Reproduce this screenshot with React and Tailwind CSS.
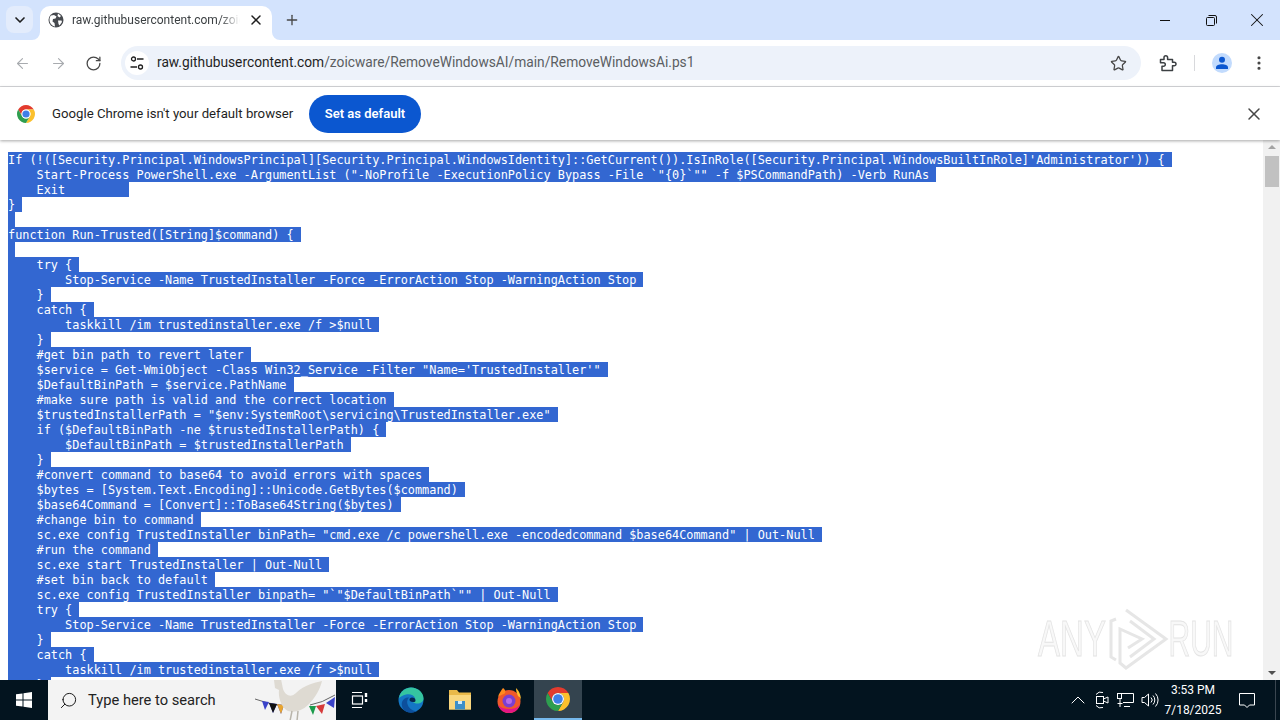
import React from 'react';
import { ArrowLeft, ArrowRight, ChevronDown, ChevronUp, EllipsisVertical, Plus, RotateCw, Search, Star, X } from 'lucide-react';

const UI_FONT = 'font-["Roboto",sans-serif]';

const CODE_LINES = [
  'If (!([Security.Principal.WindowsPrincipal][Security.Principal.WindowsIdentity]::GetCurrent()).IsInRole([Security.Principal.WindowsBuiltInRole]\'Administrator\')) {',
  '    Start-Process PowerShell.exe -ArgumentList ("-NoProfile -ExecutionPolicy Bypass -File `"{0}`"" -f $PSCommandPath) -Verb RunAs',
  '    Exit        ',
  '}',
  '',
  'function Run-Trusted([String]$command) {',
  '',
  '    try {',
  '        Stop-Service -Name TrustedInstaller -Force -ErrorAction Stop -WarningAction Stop',
  '    }',
  '    catch {',
  '        taskkill /im trustedinstaller.exe /f >$null',
  '    }',
  '    #get bin path to revert later',
  '    $service = Get-WmiObject -Class Win32_Service -Filter "Name=\'TrustedInstaller\'"',
  '    $DefaultBinPath = $service.PathName',
  '    #make sure path is valid and the correct location',
  '    $trustedInstallerPath = "$env:SystemRoot\\servicing\\TrustedInstaller.exe"',
  '    if ($DefaultBinPath -ne $trustedInstallerPath) {',
  '        $DefaultBinPath = $trustedInstallerPath',
  '    }',
  '    #convert command to base64 to avoid errors with spaces',
  '    $bytes = [System.Text.Encoding]::Unicode.GetBytes($command)',
  '    $base64Command = [Convert]::ToBase64String($bytes)',
  '    #change bin to command',
  '    sc.exe config TrustedInstaller binPath= "cmd.exe /c powershell.exe -encodedcommand $base64Command" | Out-Null',
  '    #run the command',
  '    sc.exe start TrustedInstaller | Out-Null',
  '    #set bin back to default',
  '    sc.exe config TrustedInstaller binpath= "`"$DefaultBinPath`"" | Out-Null',
  '    try {',
  '        Stop-Service -Name TrustedInstaller -Force -ErrorAction Stop -WarningAction Stop',
  '    }',
  '    catch {',
  '        taskkill /im trustedinstaller.exe /f >$null',
  '    }',
];

const ChromeLogo = ({ size }) => (
  <svg width={size} height={size} viewBox="4 4 40 40">
    <path d="M24 14H41.32A20 20 0 0 0 6.68 14L15.34 29A10 10 0 0 1 24 14z" fill="#e33b2e" />
    <path d="M41.32 14H24A10 10 0 0 1 32.66 29L24 44A20 20 0 0 0 41.32 14z" fill="#fbc02d" />
    <path d="M24 44L32.66 29A10 10 0 0 1 15.34 29L6.68 14A20 20 0 0 0 24 44z" fill="#2e9e4f" />
    <circle cx="24" cy="24" r="10" fill="#fff" />
    <circle cx="24" cy="24" r="8" fill="#3f7fe8" />
  </svg>
);

const GlobeIcon = () => (
  <svg width="16" height="16" viewBox="0 0 16 16">
    <circle cx="8" cy="8" r="7.5" fill="#474a4f" />
    <path d="M3 3.5 6 3l2.5 1.5-1 2L5 7 4.5 9.5 6.500 11l.5 3.500C4 14 1.500 11 1.500 8 1.500 6 2 4.500 3 3.500zM10 1.500l3 2.500-1.500 1.500L9.500 4zM10 8.500l3.500 0 .5 1.500-2.500 3.500L10.500 12z" fill="#fff" />
  </svg>
);

const TuneIcon = () => (
  <svg width="16" height="16" viewBox="0 0 16 16" fill="none" stroke="#1f1f1f" strokeWidth="1.300">
    <circle cx="4.500" cy="4" r="2" />
    <path d="M8 4h6.500M1.500 12H8" />
    <circle cx="11.500" cy="12" r="2" />
  </svg>
);

const PuzzleIcon = () => (
  <svg width="18" height="18" viewBox="0 0 18 18" fill="none" stroke="#3c4043" strokeWidth="1.500" strokeLinejoin="round">
    <path d="M1.500 5.500H5V3.500A1.800 1.800 0 0 1 8.600 3.500V5.500H13.500V8.200H15.200A1.800 1.800 0 0 1 15.200 11.800H13.500V16.500H3V12.300H4.500A1.800 1.800 0 0 0 4.500 8.700H1.500z" />
  </svg>
);

const AvatarIcon = () => (
  <div className="w-5 h-5 rounded-full bg-[#c2dbfd] flex items-center justify-center">
    <svg width="14" height="14" viewBox="0 0 14 14" fill="#0b57d0">
      <circle cx="7" cy="3.800" r="3" />
      <path d="M1 13v-1.500C1 9.500 4 8.300 7 8.300s6 1.200 6 3.200V13z" />
    </svg>
  </div>
);

const RestoreIcon = () => (
  <svg width="11" height="11" viewBox="0 0 11 11" fill="none" stroke="#111" strokeWidth="1">
    <rect x="0.500" y="2.500" width="8" height="8" rx="1" />
    <path d="M2.500 0.500H9A1.500 1.500 0 0 1 10.500 2V8.500" />
  </svg>
);

const WindowsLogo = () => (
  <svg width="16" height="16" viewBox="0 0 16 16" fill="#fff">
    <path d="M0 2.300 6.500 1.400V7.500H0zM7.500 1.200 16 0V7.500H7.500zM0 8.500H6.500V14.600L0 13.700zM7.500 8.500H16V16L7.500 14.800z" />
  </svg>
);

const TaskViewIcon = () => (
  <svg width="18" height="18" viewBox="0 0 18 18" fill="none" stroke="#fff" strokeWidth="1.200">
    <path d="M1 1.500H11M1 16.500H11" />
    <rect x="1.500" y="5" width="10" height="8" />
    <path d="M15 2V6M15 8V11" strokeWidth="2.400" />
  </svg>
);

const EdgeLogo = () => (
  <svg width="26" height="26" viewBox="0 0 26 26">
    <circle cx="13" cy="13" r="12.500" fill="#1476c4" />
    <path d="M1 11C2 4 8 .5 13 .5c7 0 12.500 5 12.500 11 0 3.500-3 5-6 5-2 0-4-.6-4.500-1.500 2-1 2.500-2.500 2-4C16 8 12 6.500 8 7.500 4.500 8.500 2 10 1 11z" fill="#35c4a0" />
    <path d="M9 25c-4-1.500-6-6-5-10 1-3 4-5 7-4.500-2 2-2.500 5-1 8 1.500 3.500 5 5.500 9 5.500-3 2-7 2-10 1z" fill="#0c4f9c" />
    <path d="M14 10.500c2 0 3.500 1.300 3.500 3 0 1-.6 1.500-2.500 1.500-2.500 0-3.500-1-3.500-2.500 0-1 1-2 2.500-2z" fill="#06264f" />
  </svg>
);

const FolderLogo = () => (
  <svg width="24" height="22" viewBox="0 0 24 22">
    <path d="M1 1H9L11 3.500H23V20.500H1z" fill="#e9b949" />
    <path d="M1 6H23V20.500H1z" fill="#f9d77e" />
    <rect x="7" y="12" width="10" height="8.500" fill="#3d8fc9" />
    <rect x="10" y="12" width="4" height="3" fill="#d3ecfa" />
  </svg>
);

const FirefoxLogo = () => (
  <svg width="24" height="26" viewBox="0 0 24 26">
    <circle cx="12" cy="14.500" r="11.500" fill="#f0592a" />
    <path d="M19 1c4 4 5 8 5 13 0-3-2-4-3-5-1-2-2-5-2-8z" fill="#ffbd30" />
    <path d="M6 1c-2 3-4 5-5 9 2-2 4-2 6-3 2-1 2-4-1-6z" fill="#ff8a1e" />
    <path d="M1 18c2 5 6 8 11 8s9-3 11-8c-3 3-7 4-11 4S4 21 1 18z" fill="#e31587" />
    <circle cx="12" cy="14" r="6.500" fill="#7b3fd1" />
    <circle cx="12" cy="14" r="3" fill="#b56bea" />
  </svg>
);

const Dove = () => (
  <svg width="82" height="50" viewBox="0 0 82 50" className="shrink-0">
    <path d="M1 24Q12 28 24 30" stroke="#666" fill="none" />
    <path d="M56 30Q68 28 81 20" stroke="#666" fill="none" />
    <path d="M8 26 15 27 11 35zM15 28 23 29 19 38zM23 29 30 30 27 39z" fill="#3a43c9" />
    <path d="M15 28 23 29 19 38z" fill="#111" />
    <path d="M23 29 30 30 27 39z" fill="#e8a531" />
    <path d="M55 31 62 31 59 40z" fill="#1b9b4b" />
    <path d="M62 31 71 29 68 39z" fill="#d63a3a" />
    <path d="M72 28 81 22 80 33z" fill="#3a43c9" />
    <path d="M20 5 27 4 29 14C32 22 38 22 42 18 50 10 60 8 68 6 66 14 62 22 54 30 48 36 40 38 34 36 28 33 24 24 25 15L21 13z" fill="#dedad2" />
    <path d="M38 36 36 46M44 36 43 46" stroke="#b8b4aa" strokeWidth="1.500" />
  </svg>
);

const MeetIcon = () => (
  <svg width="16" height="18" viewBox="0 0 16 18" fill="none" stroke="#fff" strokeWidth="1">
    <rect x="2.500" y="5.500" width="7" height="7" />
    <path d="M9.500 8 14 6V12L9.500 10M2 3.500A6 6 0 0 1 9 1.500M2 14.500A6 6 0 0 0 9 16.500" />
  </svg>
);

const NetworkIcon = () => (
  <svg width="18" height="16" viewBox="0 0 18 16" fill="none" stroke="#fff" strokeWidth="1">
    <path d="M3.500 1.500H16.500V10.500H6M3 6.500V15M0.500 11.500H5.500M7 14.500H13" />
    <rect x="0.500" y="1.500" width="4" height="5" />
  </svg>
);

const VolumeIcon = () => (
  <svg width="18" height="16" viewBox="0 0 18 16" fill="none" stroke="#fff" strokeWidth="1">
    <path d="M1 5.500H3.500L7.500 2V14L3.500 10.500H1zM10 5.500A3.500 3.500 0 0 1 10 10.500M12 3.500A6.500 6.500 0 0 1 12 12.500M14.500 1.500A9.500 9.500 0 0 1 14.500 14.500" />
  </svg>
);

const ActionIcon = () => (
  <svg width="18" height="18" viewBox="0 0 18 18" fill="none" stroke="#fff" strokeWidth="1">
    <path d="M1.500 2.500H16.500V14H11.500L9 16.500 6.500 14H1.500z" />
  </svg>
);

const Watermark = () => (
  <div className='absolute right-[48px] bottom-[9px] flex items-center font-["Liberation_Sans",sans-serif] text-[50px] leading-none text-[#f8f8f8] [-webkit-text-stroke:1px_#e4e4e4] pointer-events-none'>
    <span className="scale-x-[0.66] w-[68px] flex justify-center">ANY</span>
    <svg width="62" height="64" viewBox="0 0 62 64" fill="none" stroke="#e6e6e6" strokeWidth="3" className="ml-[2px]">
      <path d="M8 12 3 14V50L8 53M18 3 58 32 18 61 12 56V22l22 10-14 9" />
      <path d="M22 14 46 32 22 50" />
    </svg>
    <span className="scale-x-[0.6] w-[62px] flex justify-center">RUN</span>
  </div>
);

const TabStrip = () => (
  <div className="h-10 shrink-0 bg-[#d3e3fd] flex items-end relative">
    <div className="w-[27px] h-[27px] ml-[6px] mb-[7px] rounded-lg bg-[#e3ecfc] flex items-center justify-center">
      <ChevronDown size={16} strokeWidth={2.5} color="#1f1f1f" />
    </div>
    <div className="w-[232px] h-[34px] ml-[7px] pb-[6px] bg-white rounded-t-[10px] flex items-center pl-2 relative">
      <svg width="8" height="8" viewBox="0 0 8 8" className="absolute -left-2 bottom-0"><path d="M8 0V8H0A8 8 0 0 0 8 0z" fill="#fff" /></svg>
      <svg width="8" height="8" viewBox="0 0 8 8" className="absolute -right-2 bottom-0"><path d="M0 0V8H8A8 8 0 0 1 0 0z" fill="#fff" /></svg>
      <GlobeIcon />
      <div className={`ml-2 w-[168px] overflow-hidden whitespace-nowrap text-[12px] leading-[14px] text-[#3c4043] ${UI_FONT} [mask-image:linear-gradient(to_right,black_88%,transparent)]`}>
        raw.githubusercontent.com/zoicware/RemoveWindowsAI
      </div>
      <X size={16} strokeWidth={2.2} color="#1f1f1f" className="ml-2" />
    </div>
    <Plus size={16} strokeWidth={2} color="#474747" className="ml-3 mb-3" />
    <div className="ml-auto flex items-center h-full">
      <div className="w-[46px] flex justify-center"><div className="w-[10px] h-px bg-[#111]" /></div>
      <div className="w-[46px] flex justify-center"><RestoreIcon /></div>
      <div className="w-[46px] flex justify-center"><X size={22} strokeWidth={1.1} color="#111" /></div>
    </div>
  </div>
);

const Toolbar = () => (
  <div className="h-[47px] shrink-0 bg-white rounded-t-lg border-b border-[#d8d9dc] flex items-center">
    <ArrowLeft size={17} strokeWidth={1.6} color="#a8abaf" className="ml-[14px]" />
    <ArrowRight size={17} strokeWidth={1.6} color="#a8abaf" className="ml-[19px]" />
    <RotateCw size={17} strokeWidth={1.8} color="#474747" className="ml-[18px]" />
    <div className="w-[1020px] h-[34px] ml-[19px] rounded-full bg-[#edf2fa] flex items-center pl-1">
      <div className="w-[24px] h-[24px] rounded-full bg-white flex items-center justify-center"><TuneIcon /></div>
      <div className={`ml-2 text-[13.750px] leading-none text-[#5b5e62] ${UI_FONT}`}>
        <span className="text-[#1f1f1f]">raw.githubusercontent.com</span>/zoicware/RemoveWindowsAI/main/RemoveWindowsAi.ps1
      </div>
      <Star size={17} strokeWidth={1.8} color="#474747" className="ml-auto mr-[14px]" />
    </div>
    <div className="ml-[18px]"><PuzzleIcon /></div>
    <div className="w-px h-[16px] bg-[#d8d9dc] ml-[17px]" />
    <div className="ml-[17px]"><AvatarIcon /></div>
    <EllipsisVertical size={18} strokeWidth={2.2} color="#474747" className="ml-[18px]" />
  </div>
);

const InfoBar = () => (
  <div className="h-[53px] shrink-0 bg-white flex items-center shadow-[0_1px_3px_rgba(0,0,0,0.35)] relative z-10">
    <div className="ml-[17px]"><ChromeLogo size={18} /></div>
    <div className={`ml-[17px] w-[241px] whitespace-nowrap text-[13.200px] text-[#1f1f1f] leading-none ${UI_FONT}`}>Google Chrome isn't your default browser</div>
    <div className={`ml-4 w-[112px] h-[38px] rounded-full bg-[#0b57d0] text-white text-[13px] font-semibold flex items-center justify-center ${UI_FONT}`}>Set as default</div>
    <X size={20} strokeWidth={1.8} color="#474747" className="ml-auto mr-4" />
  </div>
);

const Scrollbar = () => (
  <div className="w-[17px] shrink-0 bg-[#f1f1f1] flex flex-col items-center">
    <div className="w-0 h-0 mt-[5px] border-x-[4px] border-x-transparent border-b-[4px] border-b-[#a3a3a3]" />
    <div className="w-[14px] h-[31px] mt-[7px] bg-[#c1c1c1]" />
    <div className="w-0 h-0 mt-auto mb-[5px] border-x-[4px] border-x-transparent border-t-[4px] border-t-[#505050]" />
  </div>
);

const Page = () => (
  <div className="h-[540px] shrink-0 bg-white flex relative">
    <div className='flex-1 overflow-hidden pt-3 pl-2 font-["DejaVu_Sans_Mono",monospace] text-[11.875px] text-white'>
      {CODE_LINES.map((line, i) => (
        <div key={i} className="w-fit h-[15px] leading-[17px] whitespace-pre bg-[#3367d1]">{line + ' '}</div>
      ))}
    </div>
    <Scrollbar />
    <Watermark />
  </div>
);

const Taskbar = () => (
  <div className={`h-10 shrink-0 bg-[#03141f] flex items-center text-white relative ${UI_FONT}`}>
    <div className="w-12 flex justify-center"><WindowsLogo /></div>
    <div className="w-[288px] h-full bg-[#f3f3f3] flex items-center pl-[11px] overflow-hidden">
      <Search size={19} strokeWidth={1.2} color="#111" className="-scale-x-100" />
      <span className="ml-[10px] text-[14.700px] text-[#222] whitespace-nowrap">Type here to search</span>
      <div className="ml-auto"><Dove /></div>
    </div>
    <div className="ml-[15px]"><TaskViewIcon /></div>
    <div className="ml-[29px]"><EdgeLogo /></div>
    <div className="ml-[24px]"><FolderLogo /></div>
    <div className="ml-[25px]"><FirefoxLogo /></div>
    <div className="ml-[13px] w-12 h-full bg-[#34444f] border-b-2 border-[#76b9ed] flex items-center justify-center"><ChromeLogo size={24} /></div>
    <div className="ml-auto"><ChevronUp size={24} strokeWidth={1} color="#fff" /></div>
    <div className="ml-[4px]"><MeetIcon /></div>
    <div className="ml-[7px]"><NetworkIcon /></div>
    <div className="ml-[6px]"><VolumeIcon /></div>
    <div className="w-[66px] ml-[1px] text-center text-[12px] leading-[20px]">
      <div>3:53 PM</div>
      <div>7/18/2025</div>
    </div>
    <div className="ml-[12px]"><ActionIcon /></div>
    <div className="w-px h-full bg-[#3a4650] ml-[19px] mr-[4px]" />
  </div>
);

export default function App() {
  return (
    <div className="w-[1280px] h-[720px] overflow-hidden flex flex-col bg-white">
      <TabStrip />
      <Toolbar />
      <InfoBar />
      <Page />
      <Taskbar />
    </div>
  );
}
